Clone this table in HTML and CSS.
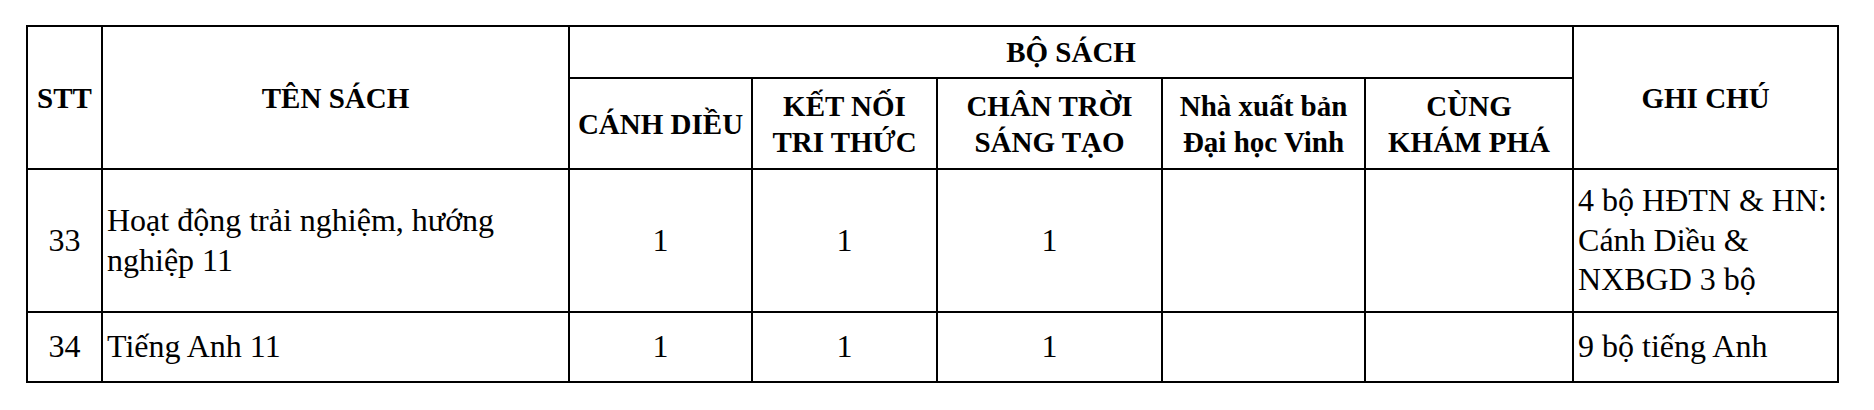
FILE: index.html
```html
<!DOCTYPE html>
<html lang="vi">
<head>
<meta charset="utf-8">
<title>Bộ sách</title>
<link rel="stylesheet" href="styles.css">
</head>
<body>
<table class="books">
  <colgroup>
    <col class="c-stt">
    <col class="c-name">
    <col class="c-cd">
    <col class="c-kn">
    <col class="c-ct">
    <col class="c-nxb">
    <col class="c-ckp">
    <col class="c-note">
  </colgroup>
  <thead>
    <tr class="r-top">
      <th rowspan="2">STT</th>
      <th rowspan="2">TÊN SÁCH</th>
      <th colspan="5">BỘ SÁCH</th>
      <th rowspan="2">GHI CHÚ</th>
    </tr>
    <tr class="r-sub">
      <th>CÁNH DIỀU</th>
      <th>KẾT NỐI<br>TRI THỨC</th>
      <th>CHÂN TRỜI<br>SÁNG TẠO</th>
      <th>Nhà xuất bản<br>Đại học Vinh</th>
      <th>CÙNG<br>KHÁM PHÁ</th>
    </tr>
  </thead>
  <tbody>
    <tr class="r-33">
      <td class="num">33</td>
      <td class="text">Hoạt động trải nghiệm, hướng<br>nghiệp 11</td>
      <td class="num">1</td>
      <td class="num">1</td>
      <td class="num">1</td>
      <td></td>
      <td></td>
      <td class="text">4 bộ HĐTN &amp; HN:<br>Cánh Diều &amp;<br>NXBGD 3 bộ</td>
    </tr>
    <tr class="r-34">
      <td class="num">34</td>
      <td class="text">Tiếng Anh 11</td>
      <td class="num">1</td>
      <td class="num">1</td>
      <td class="num">1</td>
      <td></td>
      <td></td>
      <td class="text">9 bộ tiếng Anh</td>
    </tr>
  </tbody>
</table>
</body>
</html>
```
FILE: styles.css
```css
html, body {
  margin: 0;
  padding: 0;
  background: #ffffff;
}

body {
  padding: 25px 0 0 26px;
  font-family: "Liberation Serif", "Times New Roman", serif;
  color: #000000;
}

.books {
  border-collapse: collapse;
  table-layout: fixed;
  width: 1811px;
}

.c-stt { width: 75px; }
.c-name { width: 467px; }
.c-cd { width: 183px; }
.c-kn { width: 185px; }
.c-ct { width: 225px; }
.c-nxb { width: 203px; }
.c-ckp { width: 208px; }
.c-note { width: 265px; }

.books th,
.books td {
  border: 2.5px solid #000000;
  padding: 0 4px;
  vertical-align: middle;
}

.books th {
  font-weight: bold;
  font-size: 29px;
  line-height: 36px;
  text-align: center;
}

.books td {
  font-size: 32px;
  line-height: 39.5px;
}

.r-top th { height: 50px; }
.r-sub th { height: 89px; }
.r-33 td { height: 141px; }
.r-34 td { height: 68px; }

.books td.num {
  text-align: center;
}

.books td.text {
  text-align: left;
}
```
